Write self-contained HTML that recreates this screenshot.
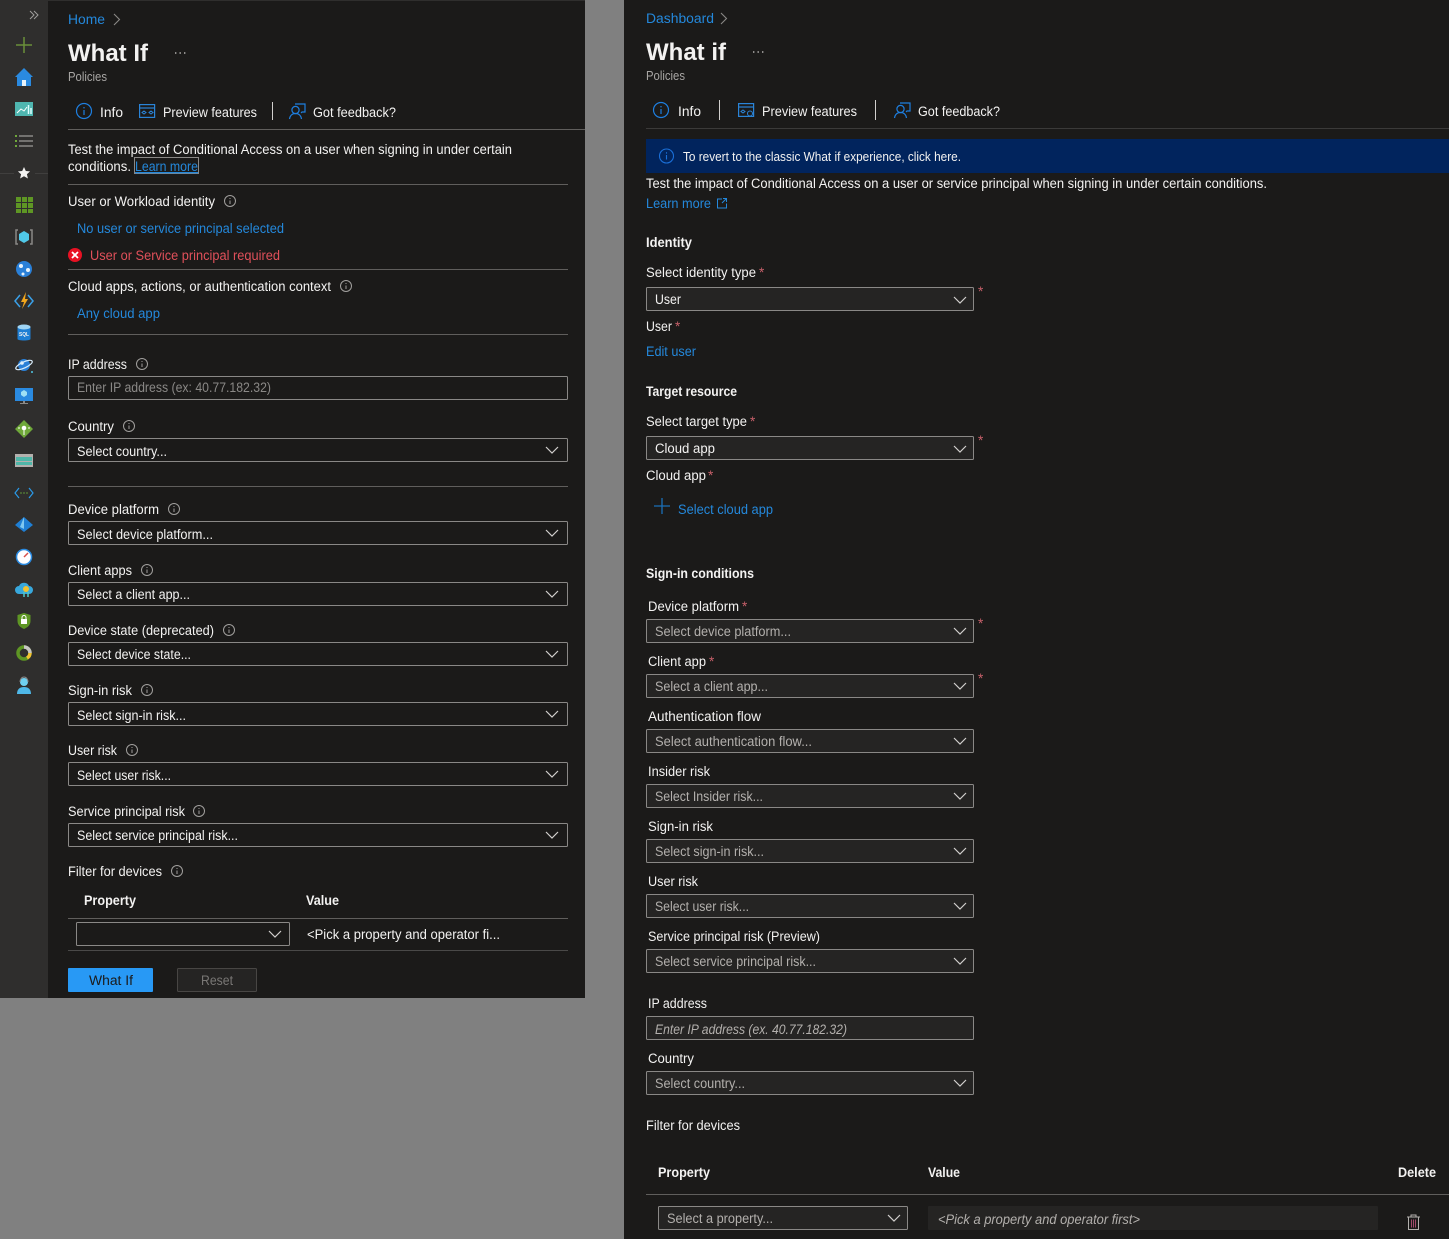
<!DOCTYPE html>
<html lang="en"><head><meta charset="utf-8"><title>What If</title>
<style>
html,body{margin:0;padding:0;background:#808080;width:1449px;height:1239px;overflow:hidden}
svg{display:block}
text{font-family:"Liberation Sans",sans-serif;font-size:13.5px;fill:#f3f2f1}
.b{fill:#2488db}.d{fill:#a8a6a4}.s{font-weight:bold}.r{fill:#c8606a}.g{fill:#b3b0ad}
.i{font-style:italic}
.ln{stroke:#605e5c;stroke-width:1}.ln2{stroke:#3b3a39;stroke-width:1}
.sel{fill:#1b1a19;stroke:#8a8886;stroke-width:1}.sel2{fill:#252423;stroke:#8a8886;stroke-width:1}
</style></head><body>
<svg xmlns="http://www.w3.org/2000/svg" width="1449" height="1239" viewBox="0 0 1449 1239">
<defs>
<g id="ci" fill="none" stroke="#a19f9d"><circle cx="0" cy="0" r="5.5"/><path d="M0-.5V3M0-3v1"/></g>
<path id="cv" d="M0 0l6 6 6-6" fill="none" stroke="#d2d0ce" stroke-width="1.2"/>
<path id="cr" d="M0 0l5.500 5.500-5.500 5.500" fill="none" stroke="#8a8886" stroke-width="1.1"/>
<g id="bi" fill="none" stroke="#1e7fe0" stroke-width="1.2"><circle cx="0" cy="0" r="7.500"/><path d="M0-1V4M0-4v1.400"/></g>
<g id="pv" fill="none" stroke="#2a84d8" stroke-width="1.200"><rect x=".6" y=".6" width="15" height="12.800"/><path d="M.6 4h15"/></g>
<g id="fb" fill="none" stroke="#1e7fe0" stroke-width="1.200"><circle cx="6.500" cy="7" r="3.600"/><path d="M.5 16c.5-3.500 2.800-5.500 6-5.500s5.500 2 6 5.500M6 1h10v8h-3l-1 1"/></g>
</defs>

<rect width="1449" height="1239" fill="#808080"/>
<!-- LEFT PANEL -->
<rect x="0" y="0" width="585" height="998" fill="#1b1a19"/>
<rect x="0" y="0" width="48" height="998" fill="#2f2e2d"/>
<rect x="0" y="0" width="585" height="1" fill="#2f2e2d"/>
<path d="M30 11l4 4-4 4M34 11l4 4-4 4" fill="none" stroke="#a19f9d"/>
<!-- sidebar icons -->
<path d="M24 37v16M16 45h16" stroke="#6a8f3a" stroke-width="1.500"/>
<path d="M24 68l9 9h-2v9H17v-9h-2z" fill="#2a8ae0"/><rect x="22" y="80" width="4" height="6" fill="#e8f3fb"/>
<rect x="15" y="102" width="18" height="14" fill="#4fb6b0"/><path d="M17 113l4-4 3 2 3-4" fill="none" stroke="#fff"/><path d="M28.500 105v9M31 108v6" stroke="#dff" stroke-width="1.500"/>
<path d="M19 136h14M19 141h14M19 146h14" stroke="#8a8886" stroke-width="1.500"/><path d="M15 136h2M15 141h2M15 146h2" stroke="#6fa83a" stroke-width="2"/>
<path d="M0 173.500h14M35 173.500h13" stroke="#403f3e"/>
<path d="M24 167l1.800 4 4.300.4-3.200 2.900 1 4.200L24 176.300 20.100 178.500l1-4.200-3.200-2.900 4.300-.4z" fill="#f3f2f1"/>
<g fill="#5e9624"><rect x="16" y="197" width="5" height="5"/><rect x="22" y="197" width="5" height="5"/><rect x="28" y="197" width="5" height="5"/><rect x="16" y="203" width="5" height="5"/><rect x="22" y="203" width="5" height="5"/><rect x="28" y="203" width="5" height="5"/><rect x="16" y="209" width="5" height="4"/><rect x="22" y="209" width="5" height="4"/><rect x="28" y="209" width="5" height="4"/></g>
<path d="M18 230h-2v14h2M30 230h2v14h-2" fill="none" stroke="#8a8886" stroke-width="1.500"/><path d="M24 231l5 3v6l-5 3-5-3v-6z" fill="#50c8e8"/>
<circle cx="24" cy="269" r="8" fill="#2a80d8"/><circle cx="21" cy="266" r="2" fill="#e8f3fb"/><circle cx="28" cy="270" r="2" fill="#e8f3fb"/><circle cx="23" cy="274" r="1.500" fill="#e8f3fb"/>
<path d="M20 295l-5 6 5 6M28 295l5 6-5 6" fill="none" stroke="#3aa0e8" stroke-width="1.500"/><path d="M26 292l-5 10h3l-2 7 6-10h-3z" fill="#f2a61c"/>
<path d="M17.500 327v12c0 2 13 2 13 0v-12z" fill="#1f7fd4"/><ellipse cx="24" cy="327" rx="6.500" ry="2.500" fill="#9fd4f4"/><text x="19" y="336" textLength="10" lengthAdjust="spacingAndGlyphs" style="font-size:5px;font-weight:bold">SQL</text>
<circle cx="24" cy="365" r="6" fill="#2a80d8"/><circle cx="22" cy="363" r="1.800" fill="#e8f3fb"/><ellipse cx="24" cy="365" rx="9" ry="3" fill="none" stroke="#d8ecfa" stroke-width="1.200" transform="rotate(-25 24 365)"/><path d="M31 372h2M32 371v2" stroke="#50c8e8"/>
<rect x="15" y="388" width="18" height="13" fill="#2a8ae0"/><path d="M24 390l3 2v3l-3 2-3-2v-3z" fill="#9fe0f4"/><path d="M23 401h2v2h3v1h-8v-1h3z" fill="#8a8886"/>
<path d="M24 420l9 9-9 9-9-9z" fill="#6fa83a"/><circle cx="24" cy="428" r="2.300" fill="#fff"/><path d="M24 430v5M20 428h-2M28 428h2" stroke="#fff"/>
<rect x="15" y="454" width="18" height="13" fill="#b3b0ad"/><rect x="16" y="457" width="16" height="4" fill="#4fb6a8"/><rect x="16" y="462" width="16" height="3" fill="#4fb6a8"/>
<path d="M19 488l-4 5 4 5M29 488l4 5-4 5" fill="none" stroke="#2a9ae8" stroke-width="1.200"/><path d="M20.500 493h1M23.500 493h1M26.500 493h1" stroke="#6fb83a" stroke-width="1.500"/>
<path d="M24 517l9 8-9 7-9-7z" fill="#1f7fd4"/><path d="M24 517l-4 10 4 2z" fill="#7fc8f0"/>
<circle cx="24" cy="557" r="7.500" fill="#fff" stroke="#2a8ae0" stroke-width="1.500"/><path d="M24 557l4-4" stroke="#d8504a" stroke-width="1.500"/>
<path d="M19 594a4 4 0 0 1 0-8 5.500 5.500 0 0 1 10 0 4 4 0 0 1 0 8z" fill="#38a8dc"/><circle cx="26" cy="589" r="3" fill="#f2c230"/><path d="M24 592v5M28 592v5" stroke="#4fc8c8" stroke-width="1.500"/>
<path d="M24 613l6.500 2v6c0 4-3 6.500-6.500 8-3.500-1.500-6.500-4-6.500-8v-6z" fill="#5e9624"/><rect x="21" y="619" width="6" height="5" fill="#fff"/><path d="M22 619v-1.500a2 2 0 0 1 4 0v1.500" fill="none" stroke="#fff"/>
<circle cx="24" cy="653" r="6" fill="none" stroke="#5e9624" stroke-width="3.500"/><path d="M24 647a6 6 0 0 1 6 6" fill="none" stroke="#c8c6c4" stroke-width="3.500"/><path d="M30 653a6 6 0 0 1-3 5" fill="none" stroke="#f2c230" stroke-width="3.500"/>
<circle cx="24" cy="682" r="4" fill="#6fd0f0"/><path d="M17 694c0-5 3-7 7-7s7 2 7 7z" fill="#4fb8e8"/><path d="M20 682a4 5 0 0 1 8 0" fill="none" stroke="#888"/>

<text class="b" x="68" y="24" textLength="37" lengthAdjust="spacingAndGlyphs">Home</text>
<use href="#cr" x="114" y="14"/>
<text class="s" x="68" y="61" textLength="80" lengthAdjust="spacingAndGlyphs" style="font-size:24px">What If</text>
<path d="M175 53h1.400M179.500 53h1.400M184 53h1.400" stroke="#d2d0ce" stroke-width="1.200"/>
<text class="d" x="68" y="81" textLength="39" lengthAdjust="spacingAndGlyphs" style="font-size:12.500px">Policies</text>

<use href="#bi" x="84" y="111"/>
<text x="100" y="117" textLength="23" lengthAdjust="spacingAndGlyphs">Info</text>
<use href="#pv" x="139" y="104"/><path d="M144 111l2 1.500-2 1.500-2-1.500zM151 111l2 1.500-2 1.500-2-1.500z" fill="none" stroke="#2a84d8"/>
<text x="163" y="117" textLength="94" lengthAdjust="spacingAndGlyphs">Preview features</text>
<path d="M272.500 102v18" stroke="#d2d0ce"/>
<use href="#fb" x="289" y="103"/>
<text x="313" y="117" textLength="83" lengthAdjust="spacingAndGlyphs">Got feedback?</text>
<path class="ln" d="M68 129.500h517"/>

<text x="68" y="154" textLength="444" lengthAdjust="spacingAndGlyphs">Test the impact of Conditional Access on a user when signing in under certain</text>
<text x="68" y="171" textLength="63" lengthAdjust="spacingAndGlyphs">conditions.</text>
<rect x="134.500" y="157.500" width="64" height="16" fill="none" stroke="#8a8886"/>
<text class="b" x="135" y="171" textLength="63" lengthAdjust="spacingAndGlyphs" text-decoration="underline">Learn more</text>
<path class="ln" d="M68 184.500h500"/>

<text x="68" y="206" textLength="147" lengthAdjust="spacingAndGlyphs">User or Workload identity</text><use href="#ci" x="230" y="201"/>
<text class="b" x="77" y="233" textLength="207" lengthAdjust="spacingAndGlyphs">No user or service principal selected</text>
<circle cx="75" cy="255" r="7" fill="#e81123"/><path d="M72 252l6 6M78 252l-6 6" stroke="#fff" stroke-width="1.800"/>
<text x="90" y="260" textLength="190" lengthAdjust="spacingAndGlyphs" style="fill:#e0505a">User or Service principal required</text>
<path class="ln" d="M68 269.500h500"/>

<text x="68" y="291" textLength="263" lengthAdjust="spacingAndGlyphs">Cloud apps, actions, or authentication context</text><use href="#ci" x="346" y="286"/>
<text class="b" x="77" y="318" textLength="83" lengthAdjust="spacingAndGlyphs">Any cloud app</text>
<path class="ln" d="M68 334.500h500"/>

<text x="68" y="369" textLength="59" lengthAdjust="spacingAndGlyphs">IP address</text><use href="#ci" x="142" y="364"/>
<rect class="sel" x="68.500" y="376.500" width="499" height="23" rx="1"/>
<text x="77" y="392" textLength="194" lengthAdjust="spacingAndGlyphs" style="fill:#8a8886">Enter IP address (ex: 40.77.182.32)</text>

<text x="68" y="431" textLength="46" lengthAdjust="spacingAndGlyphs">Country</text><use href="#ci" x="129" y="426"/>
<rect class="sel" x="68.500" y="438.500" width="499" height="23" rx="1"/>
<text x="77" y="456" textLength="90" lengthAdjust="spacingAndGlyphs">Select country...</text><use href="#cv" x="546" y="447"/>
<path class="ln" d="M68 486.500h500"/>

<text x="68" y="514" textLength="91" lengthAdjust="spacingAndGlyphs">Device platform</text><use href="#ci" x="174" y="509"/>
<rect class="sel" x="68.500" y="521.500" width="499" height="23" rx="1"/>
<text x="77" y="539" textLength="136" lengthAdjust="spacingAndGlyphs">Select device platform...</text><use href="#cv" x="546" y="530"/>

<text x="68" y="575" textLength="64" lengthAdjust="spacingAndGlyphs">Client apps</text><use href="#ci" x="147" y="570"/>
<rect class="sel" x="68.500" y="582.500" width="499" height="23" rx="1"/>
<text x="77" y="599" textLength="113" lengthAdjust="spacingAndGlyphs">Select a client app...</text><use href="#cv" x="546" y="591"/>

<text x="68" y="635" textLength="146" lengthAdjust="spacingAndGlyphs">Device state (deprecated)</text><use href="#ci" x="229" y="630"/>
<rect class="sel" x="68.500" y="642.500" width="499" height="23" rx="1"/>
<text x="77" y="659" textLength="114" lengthAdjust="spacingAndGlyphs">Select device state...</text><use href="#cv" x="546" y="651"/>

<text x="68" y="695" textLength="64" lengthAdjust="spacingAndGlyphs">Sign-in risk</text><use href="#ci" x="147" y="690"/>
<rect class="sel" x="68.500" y="702.500" width="499" height="23" rx="1"/>
<text x="77" y="720" textLength="109" lengthAdjust="spacingAndGlyphs">Select sign-in risk...</text><use href="#cv" x="546" y="711"/>

<text x="68" y="755" textLength="49" lengthAdjust="spacingAndGlyphs">User risk</text><use href="#ci" x="132" y="750"/>
<rect class="sel" x="68.500" y="762.500" width="499" height="23" rx="1"/>
<text x="77" y="780" textLength="94" lengthAdjust="spacingAndGlyphs">Select user risk...</text><use href="#cv" x="546" y="771"/>

<text x="68" y="816" textLength="117" lengthAdjust="spacingAndGlyphs">Service principal risk</text><use href="#ci" x="199" y="811"/>
<rect class="sel" x="68.500" y="823.500" width="499" height="23" rx="1"/>
<text x="77" y="840" textLength="161" lengthAdjust="spacingAndGlyphs">Select service principal risk...</text><use href="#cv" x="546" y="832"/>

<text x="68" y="876" textLength="94" lengthAdjust="spacingAndGlyphs">Filter for devices</text><use href="#ci" x="177" y="871"/>
<text class="s" x="84" y="905" textLength="52" lengthAdjust="spacingAndGlyphs">Property</text>
<text class="s" x="306" y="905" textLength="33" lengthAdjust="spacingAndGlyphs">Value</text>
<path class="ln" d="M68 918.500h500"/>
<rect class="sel" x="76.500" y="922.500" width="213" height="23" rx="1"/><use href="#cv" x="269" y="931"/>
<text x="307" y="939" textLength="193" lengthAdjust="spacingAndGlyphs">&lt;Pick a property and operator fi...</text>
<path class="ln2" d="M68 950.500h500" style="stroke:#4a4948"/>
<rect x="68" y="968" width="85" height="24" rx="1" fill="#2899f5"/>
<text x="89" y="985" textLength="44" lengthAdjust="spacingAndGlyphs" style="fill:#1b1a19">What If</text>
<rect x="177.500" y="968.500" width="79" height="23" rx="1" fill="#252423" stroke="#484644"/>
<text x="201" y="985" textLength="32" lengthAdjust="spacingAndGlyphs" style="fill:#797775">Reset</text>

<!-- RIGHT PANEL -->
<rect x="624" y="0" width="825" height="1239" fill="#1b1a19"/>
<text class="b" x="646" y="23" textLength="68" lengthAdjust="spacingAndGlyphs">Dashboard</text>
<use href="#cr" x="721" y="13"/>
<text class="s" x="646" y="60" textLength="80" lengthAdjust="spacingAndGlyphs" style="font-size:24px">What if</text>
<path d="M753 52h1.400M757.500 52h1.400M762 52h1.400" stroke="#d2d0ce" stroke-width="1.200"/>
<text class="d" x="646" y="80" textLength="39" lengthAdjust="spacingAndGlyphs" style="font-size:12.500px">Policies</text>

<use href="#bi" x="661" y="110"/>
<text x="678" y="116" textLength="23" lengthAdjust="spacingAndGlyphs">Info</text>
<path d="M719.500 100v20" stroke="#d2d0ce"/>
<use href="#pv" x="738" y="103"/><circle cx="750" cy="113.500" r="2.500" fill="#1b1a19" stroke="#2a84d8"/><path d="M743 110l2 1.500-2 1.500-2-1.500z" fill="none" stroke="#2a84d8"/>
<text x="762" y="116" textLength="95" lengthAdjust="spacingAndGlyphs">Preview features</text>
<path d="M875.500 100v20" stroke="#d2d0ce"/>
<use href="#fb" x="894" y="102"/>
<text x="918" y="116" textLength="82" lengthAdjust="spacingAndGlyphs">Got feedback?</text>
<path class="ln2" d="M646 128.500h803"/>

<rect x="646" y="139" width="803" height="34" fill="#01245d"/>
<circle cx="666.500" cy="156" r="7" fill="none" stroke="#1a6fd8" stroke-width="1.100"/><path d="M666.500 155v4.500M666.500 152.300v1.300" stroke="#1a6fd8" stroke-width="1.100"/>
<text x="683" y="161" textLength="278" lengthAdjust="spacingAndGlyphs" style="font-size:12.500px">To revert to the classic What if experience, click here.</text>
<text x="646" y="188" textLength="621" lengthAdjust="spacingAndGlyphs">Test the impact of Conditional Access on a user or service principal when signing in under certain conditions.</text>
<text class="b" x="646" y="208" textLength="65" lengthAdjust="spacingAndGlyphs">Learn more</text>
<path d="M722 199h-4.500v9h9v-4.500M722 203l4.500-4.500M723 198.500h3.500v3.500" fill="none" stroke="#2488db"/>

<text class="s" x="646" y="247" textLength="46" lengthAdjust="spacingAndGlyphs">Identity</text>
<text x="646" y="277" textLength="110" lengthAdjust="spacingAndGlyphs">Select identity type</text><text class="r" x="759" y="277">*</text>
<rect class="sel2" x="646.500" y="287.500" width="327" height="23" rx="1"/>
<text x="655" y="304" textLength="26" lengthAdjust="spacingAndGlyphs">User</text><use href="#cv" x="954" y="297"/><text class="r" x="978" y="296">*</text>
<text x="646" y="331" textLength="26" lengthAdjust="spacingAndGlyphs">User</text><text class="r" x="675" y="331">*</text>
<text class="b" x="646" y="356" textLength="50" lengthAdjust="spacingAndGlyphs">Edit user</text>

<text class="s" x="646" y="396" textLength="91" lengthAdjust="spacingAndGlyphs">Target resource</text>
<text x="646" y="426" textLength="101" lengthAdjust="spacingAndGlyphs">Select target type</text><text class="r" x="750" y="426">*</text>
<rect class="sel2" x="646.500" y="436.500" width="327" height="23" rx="1"/>
<text x="655" y="453" textLength="60" lengthAdjust="spacingAndGlyphs">Cloud app</text><use href="#cv" x="954" y="446"/><text class="r" x="978" y="445">*</text>
<text x="646" y="480" textLength="60" lengthAdjust="spacingAndGlyphs">Cloud app</text><text class="r" x="708" y="480">*</text>
<path d="M662 498v16M654 506h16" stroke="#1a6fb8" stroke-width="1.300"/>
<text class="b" x="678" y="514" textLength="95" lengthAdjust="spacingAndGlyphs">Select cloud app</text>

<text class="s" x="646" y="578" textLength="108" lengthAdjust="spacingAndGlyphs">Sign-in conditions</text>

<text x="648" y="611" textLength="91" lengthAdjust="spacingAndGlyphs">Device platform</text><text class="r" x="742" y="611">*</text>
<rect class="sel2" x="646.500" y="619.500" width="327" height="23" rx="1"/>
<text class="g" x="655" y="636" textLength="136" lengthAdjust="spacingAndGlyphs">Select device platform...</text><use href="#cv" x="954" y="628"/><text class="r" x="978" y="628">*</text>

<text x="648" y="666" textLength="58" lengthAdjust="spacingAndGlyphs">Client app</text><text class="r" x="709" y="666">*</text>
<rect class="sel2" x="646.500" y="674.500" width="327" height="23" rx="1"/>
<text class="g" x="655" y="691" textLength="113" lengthAdjust="spacingAndGlyphs">Select a client app...</text><use href="#cv" x="954" y="683"/><text class="r" x="978" y="683">*</text>

<text x="648" y="721" textLength="113" lengthAdjust="spacingAndGlyphs">Authentication flow</text>
<rect class="sel2" x="646.500" y="729.500" width="327" height="23" rx="1"/>
<text class="g" x="655" y="746" textLength="157" lengthAdjust="spacingAndGlyphs">Select authentication flow...</text><use href="#cv" x="954" y="738"/>

<text x="648" y="776" textLength="62" lengthAdjust="spacingAndGlyphs">Insider risk</text>
<rect class="sel2" x="646.500" y="784.500" width="327" height="23" rx="1"/>
<text class="g" x="655" y="801" textLength="108" lengthAdjust="spacingAndGlyphs">Select Insider risk...</text><use href="#cv" x="954" y="793"/>

<text x="648" y="831" textLength="65" lengthAdjust="spacingAndGlyphs">Sign-in risk</text>
<rect class="sel2" x="646.500" y="839.500" width="327" height="23" rx="1"/>
<text class="g" x="655" y="856" textLength="109" lengthAdjust="spacingAndGlyphs">Select sign-in risk...</text><use href="#cv" x="954" y="848"/>

<text x="648" y="886" textLength="50" lengthAdjust="spacingAndGlyphs">User risk</text>
<rect class="sel2" x="646.500" y="894.500" width="327" height="23" rx="1"/>
<text class="g" x="655" y="911" textLength="94" lengthAdjust="spacingAndGlyphs">Select user risk...</text><use href="#cv" x="954" y="903"/>

<text x="648" y="941" textLength="172" lengthAdjust="spacingAndGlyphs">Service principal risk (Preview)</text>
<rect class="sel2" x="646.500" y="949.500" width="327" height="23" rx="1"/>
<text class="g" x="655" y="966" textLength="161" lengthAdjust="spacingAndGlyphs">Select service principal risk...</text><use href="#cv" x="954" y="958"/>

<text x="648" y="1008" textLength="59" lengthAdjust="spacingAndGlyphs">IP address</text>
<rect class="sel2" x="646.500" y="1016.500" width="327" height="23" rx="1"/>
<text class="g i" x="655" y="1034" textLength="192" lengthAdjust="spacingAndGlyphs">Enter IP address (ex. 40.77.182.32)</text>

<text x="648" y="1063" textLength="46" lengthAdjust="spacingAndGlyphs">Country</text>
<rect class="sel2" x="646.500" y="1071.500" width="327" height="23" rx="1"/>
<text class="g" x="655" y="1088" textLength="90" lengthAdjust="spacingAndGlyphs">Select country...</text><use href="#cv" x="954" y="1080"/>

<text x="646" y="1130" textLength="94" lengthAdjust="spacingAndGlyphs">Filter for devices</text>
<text class="s" x="658" y="1177" textLength="52" lengthAdjust="spacingAndGlyphs">Property</text>
<text class="s" x="928" y="1177" textLength="32" lengthAdjust="spacingAndGlyphs">Value</text>
<text class="s" x="1398" y="1177" textLength="38" lengthAdjust="spacingAndGlyphs">Delete</text>
<path class="ln" d="M646 1194.500h803"/>
<rect class="sel2" x="658.500" y="1206.500" width="249" height="23" rx="1"/>
<text class="g" x="667" y="1223" textLength="106" lengthAdjust="spacingAndGlyphs">Select a property...</text><use href="#cv" x="888" y="1215"/>
<rect x="928" y="1206" width="450" height="24" rx="1" fill="#252423"/>
<text class="g i" x="938" y="1224" textLength="202" lengthAdjust="spacingAndGlyphs">&lt;Pick a property and operator first&gt;</text>
<path d="M1407 1217h13M1411 1217v-2h5v2M1408.500 1217v12.500h10V1217" fill="none" stroke="#b3b0ad"/>
<path d="M1411.500 1219.500v8M1413.500 1219.500v8M1415.500 1219.500v8" stroke="#a04a6a"/>
</svg>
</body></html>
